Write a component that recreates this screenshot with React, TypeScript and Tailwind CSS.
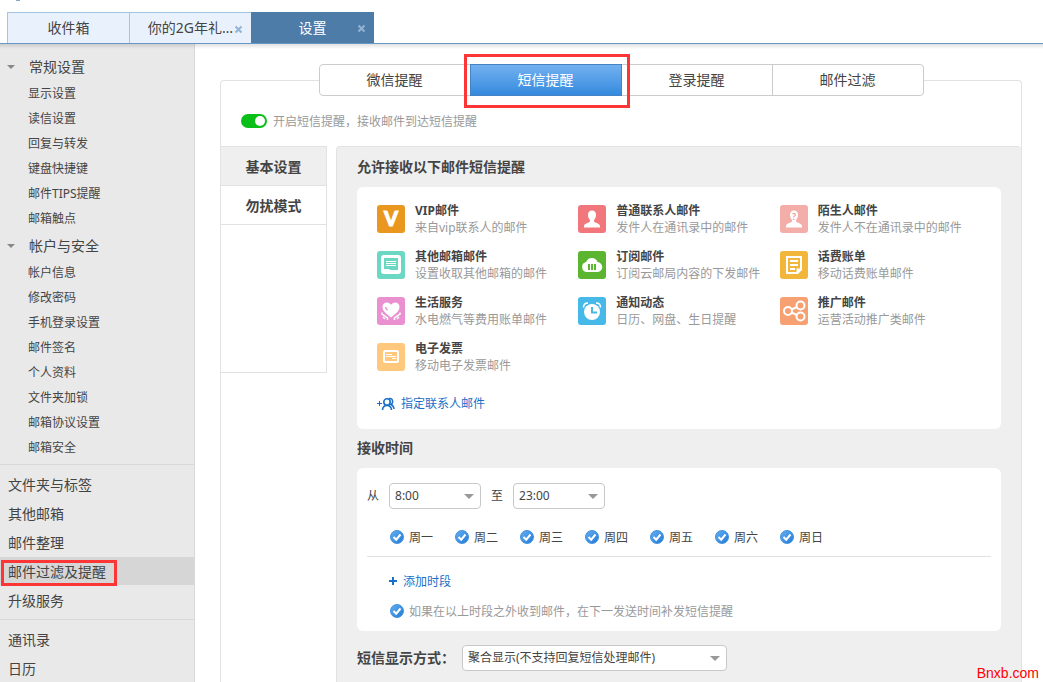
import { useState, type ReactNode } from "react";

const settingGroups = [
  {
    title: "常规设置",
    items: ["显示设置", "读信设置", "回复与转发", "键盘快捷键", "邮件TIPS提醒", "邮箱触点"],
  },
  {
    title: "帐户与安全",
    items: ["帐户信息", "修改密码", "手机登录设置", "邮件签名", "个人资料", "文件夹加锁", "邮箱协议设置", "邮箱安全"],
  },
];

const mailLinks = ["文件夹与标签", "其他邮箱", "邮件整理", "邮件过滤及提醒", "升级服务"];
const toolLinks = ["通讯录", "日历"];
const remindTabs = ["微信提醒", "短信提醒", "登录提醒", "邮件过滤"];
const weekdays = ["周一", "周二", "周三", "周四", "周五", "周六", "周日"];

type MailType = {
  title: string;
  desc: string;
  color: string;
  icon: ReactNode;
};

const mailTypes: MailType[] = [
  {
    title: "VIP邮件",
    desc: "来自vip联系人的邮件",
    color: "bg-[#ea971f]",
    icon: (
      <text
        x="14"
        y="21"
        textAnchor="middle"
        fontSize="20"
        fontWeight="900"
        fontFamily="Lato, sans-serif"
        fill="#fff"
        stroke="#fff"
        strokeWidth="1"
      >
        V
      </text>
    ),
  },
  {
    title: "普通联系人邮件",
    desc: "发件人在通讯录中的邮件",
    color: "bg-[#f2777c]",
    icon: (
      <path
        fill="#fff"
        d="M14 5.500c-2.600 0-4 1.700-4 4.500 0 1.900.7 3.600 1.900 4.700v2c-1 1-5.400 1.500-5.900 4V22.500h16v-1.800c-.5-2.500-4.900-3-5.900-4v-2c1.200-1.100 1.900-2.800 1.900-4.700 0-2.800-1.400-4.500-4-4.500z"
      />
    ),
  },
  {
    title: "陌生人邮件",
    desc: "发件人不在通讯录中的邮件",
    color: "bg-[#f3aeaa]",
    icon: (
      <>
        <path
          fill="#fff"
          d="M14 5.500c-2.600 0-4 1.700-4 4.500 0 1.900.7 3.600 1.900 4.700v2c-1 1-5.400 1.500-5.900 4V22.500h16v-1.800c-.5-2.500-4.900-3-5.900-4v-2c1.200-1.100 1.900-2.800 1.900-4.700 0-2.800-1.400-4.500-4-4.500z"
        />
        <text x="14" y="15" textAnchor="middle" fontSize="10" fontWeight="700" fontFamily="Lato, sans-serif" fill="#ef9a98">
          ?
        </text>
      </>
    ),
  },
  {
    title: "其他邮箱邮件",
    desc: "设置收取其他邮箱的邮件",
    color: "bg-[#6bd8c3]",
    icon: (
      <>
        <rect x="4" y="4" width="20" height="19" rx="3" fill="#fff" />
        <path d="M7 7h14v12h-8l-1-1H7z" fill="#6bd8c3" />
        <path d="M9 10.500h10M9 12.500h10M9 14.500h10" stroke="#fff" strokeWidth="1" />
      </>
    ),
  },
  {
    title: "订阅邮件",
    desc: "订阅云邮局内容的下发邮件",
    color: "bg-[#5cb531]",
    icon: (
      <>
        <path
          fill="#fff"
          d="M9 21a5 5 0 0 1-.8-9.900A6 6 0 0 1 19.500 11 5 5 0 0 1 19 21z"
        />
        <path d="M11 13v6M14 13v6M17 13v6" stroke="#5cb531" strokeWidth="2" />
      </>
    ),
  },
  {
    title: "话费账单",
    desc: "移动话费账单邮件",
    color: "bg-[#f2b63a]",
    icon: (
      <path
        fill="none"
        stroke="#fff"
        strokeWidth="2"
        d="M17.500 22H7V6h14v12.500h-3.500zM10 10h8M10 14h8M10 18h5M17.500 22l3.500-3.500"
      />
    ),
  },
  {
    title: "生活服务",
    desc: "水电燃气等费用账单邮件",
    color: "bg-[#ea8fd0]",
    icon: (
      <>
        <path
          fill="#fff"
          d="M14 20.500c-3-2.500-8.500-6-8.500-10.500 0-2.800 2-4.500 4.200-4.500 2 0 3.500 1 4.300 2.300.8-1.300 2.300-2.300 4.300-2.300 2.200 0 4.200 1.700 4.200 4.500 0 4.500-5.500 8-8.500 10.500z"
        />
        <path d="M8.500 10c.2 1.500 1 2.500 2 3" stroke="#ea8fd0" strokeWidth="1.500" fill="none" />
        <path
          d="M5 15.500v1.500l5.500 4v2M23 15.500v1.500l-5.500 4v2M6 20l2 2M22 20l-2 2"
          stroke="#fff"
          strokeWidth="1.500"
          fill="none"
        />
      </>
    ),
  },
  {
    title: "通知动态",
    desc: "日历、网盘、生日提醒",
    color: "bg-[#46b9e9]",
    icon: (
      <>
        <circle cx="14" cy="15" r="8" fill="#fff" />
        <path d="M5.500 10.500C5.500 7.500 7.500 6 10 6M22.500 10.500C22.500 7.500 20.500 6 18 6" stroke="#fff" strokeWidth="1.500" fill="none" />
        <path d="M14 10v5.500h5" stroke="#46b9e9" strokeWidth="2" fill="none" />
      </>
    ),
  },
  {
    title: "推广邮件",
    desc: "运营活动推广类邮件",
    color: "bg-[#f7a072]",
    icon: (
      <g fill="none" stroke="#fff" strokeWidth="2">
        <circle cx="8" cy="14" r="4" />
        <circle cx="20.500" cy="8.500" r="4" />
        <circle cx="20.500" cy="19.500" r="4" />
        <path d="M11.500 12.500l5.500-2.500M11.500 15.500l5.500 2.500" />
      </g>
    ),
  },
  {
    title: "电子发票",
    desc: "移动电子发票邮件",
    color: "bg-[#ffc87c]",
    icon: (
      <g fill="none" stroke="#fff">
        <rect x="7" y="8" width="14" height="11" rx="1" strokeWidth="2" />
        <path d="M9 11.500h6M9 13.500h10M15 15.500h4" strokeWidth="1" />
      </g>
    ),
  },
];

type TabProps = {
  label: string;
  active?: boolean;
  closable?: boolean;
};

const PageTab = ({ label, active, closable }: TabProps) => (
  <div
    className={`relative flex h-[31px] ${
      active
        ? "w-[123px] bg-[#4d7ca9] text-white"
        : "w-[122px] border-l border-t border-[#a6c5df] bg-[#e9f2fc] text-[#444]"
    }`}
  >
    <button type="button" className="flex-1 cursor-pointer text-sm">
      {label}
    </button>
    {closable && (
      <button type="button" aria-label={`关闭${label}`} className="absolute right-2 top-3 flex cursor-pointer">
        <svg width="9" height="9" viewBox="0 0 9 9" stroke="#94b4d4" strokeWidth="2">
          <path d="M1.500 1.500l6 6M7.500 1.500l-6 6" />
        </svg>
      </button>
    )}
  </div>
);

type CheckProps = {
  label: string;
  className?: string;
};

const Check = ({ label, className = "" }: CheckProps) => (
  <label className={`flex h-4 cursor-pointer items-center gap-[5px] ${className}`}>
    <span className="relative size-[14px]">
      <input
        type="checkbox"
        defaultChecked
        className="peer block size-[14px] appearance-none rounded-full border border-gray-400 bg-white checked:border-[#3c8fdd] checked:bg-linear-to-br checked:from-[#63aef2] checked:to-[#1f7ad6]"
      />
      <svg
        className="pointer-events-none absolute inset-0 hidden peer-checked:block"
        width="14"
        height="14"
        viewBox="0 0 14 14"
        fill="none"
        stroke="#fff"
        strokeWidth="2"
      >
        <path d="M3.500 7l2.700 2.700L10.500 4.500" />
      </svg>
    </span>
    <span className="pt-0.5">{label}</span>
  </label>
);

type SelectBoxProps = {
  label: string;
  options: string[];
  width: string;
};

const SelectBox = ({ label, options, width }: SelectBoxProps) => (
  <div className={`relative ${width}`}>
    <select
      aria-label={label}
      className="block h-[26px] w-full appearance-none rounded border border-[#c8c8c8] bg-white pl-[5px] text-xs text-[#444]"
    >
      {options.map((option) => (
        <option key={option}>{option}</option>
      ))}
    </select>
    <svg className="pointer-events-none absolute right-[7px] top-[11px]" width="10" height="5" viewBox="0 0 10 5" fill="#999">
      <path d="M0 0h10L5 5z" />
    </svg>
  </div>
);

const Sidebar = () => (
  <nav className="w-[195px] shrink-0 border-r border-[#d8d8d8] bg-[#e9e9e9] pt-2 text-[#444]">
    {settingGroups.map((group) => (
      <div key={group.title}>
        <button type="button" className="flex h-[29px] w-full cursor-pointer items-center pl-[7px] text-sm">
          <svg className="mr-[14px]" width="8" height="4" viewBox="0 0 8 4" fill="#888">
            <path d="M0 0h8L4 4z" />
          </svg>
          {group.title}
        </button>
        <ul>
          {group.items.map((item) => (
            <li key={item}>
              <a href="#" className="block pl-7 text-xs leading-[25px]">
                {item}
              </a>
            </li>
          ))}
        </ul>
      </div>
    ))}
    <ul className="mt-1 border-t border-[#d8d8d8] pb-1 pt-[5px] text-sm">
      {mailLinks.map((item) => (
        <li key={item} className="mb-px">
          <a
            href="#"
            className={`relative block pl-2 pt-0.5 leading-[26px] ${item === "邮件过滤及提醒" ? "bg-[#d6d6d6]" : ""}`}
          >
            {item}
            {item === "邮件过滤及提醒" && (
              <span className="absolute left-px top-[3px] h-[26px] w-[116px] border-3 border-[#fc3636]" />
            )}
          </a>
        </li>
      ))}
    </ul>
    <ul className="border-t border-[#d8d8d8] pt-[5px] text-sm">
      {toolLinks.map((item) => (
        <li key={item} className="mb-px">
          <a href="#" className="block pl-2 pt-0.5 leading-[26px]">
            {item}
          </a>
        </li>
      ))}
    </ul>
  </nav>
);

const App = () => {
  const [tab, setTab] = useState("短信提醒");

  return (
    <div className="relative flex min-h-screen flex-col bg-white font-['Noto_Sans','Noto_Sans_CJK_SC',sans-serif] text-xs text-[#444]">
      <header className="border-b border-[#6598c5]">
        <div className="h-3 pl-4">
          <svg width="4" height="1" viewBox="0 0 4 1">
            <path d="M0 0h4v1H0z" fill="#8ba6c4" />
          </svg>
        </div>
        <div className="flex pl-[7px]">
          <PageTab label="收件箱" />
          <PageTab label="你的2G年礼…" closable />
          <PageTab label="设置" active closable />
        </div>
      </header>

      <div className="flex flex-1">
        <Sidebar />

        <main className="flex flex-1 flex-col pl-[25px] pr-[21px] pt-5">
          <div className="relative z-10 flex h-8 w-[605px] self-center rounded border border-[#ccc] bg-white">
            {remindTabs.map((item, i) => (
              <button
                key={item}
                type="button"
                onClick={() => setTab(item)}
                className={`relative flex-1 cursor-pointer text-sm ${
                  tab === item
                    ? "-my-px border border-[#4583c4] bg-linear-to-b from-[#72b1f0] to-[#338ade] text-white"
                    : i === 3
                      ? "border-l border-[#ccc]"
                      : ""
                }`}
              >
                {item}
                {item === "短信提醒" && (
                  <span className="absolute -bottom-[13px] -left-[7px] -right-[9px] -top-[11px] border-3 border-[#fc3636]" />
                )}
              </button>
            ))}
          </div>

          <div className="-mt-4 flex flex-1 flex-col rounded-t border-l border-r border-t border-[#e2e2e2]">
            <label className="flex h-[65px] cursor-pointer items-center gap-[6px] pl-5 pt-[15px] text-[#999]">
              <input
                type="checkbox"
                role="switch"
                defaultChecked
                className="flex h-[14px] w-[26px] appearance-none rounded-full bg-gray-400 p-[2px] before:size-[10px] before:rounded-full before:bg-white checked:justify-end checked:bg-[#0abf18]"
              />
              <span className="pt-px">开启短信提醒，接收邮件到达短信提醒</span>
            </label>

            <div className="flex flex-1 gap-[9px]">
              <div className="h-[227px] w-[106px] shrink-0 border-b border-r border-t border-[#e2e2e2] text-sm font-bold">
                <button
                  type="button"
                  className="block h-[39px] w-full cursor-pointer border-b border-[#e2e2e2] bg-[#efefef] pt-0.5"
                >
                  基本设置
                </button>
                <button type="button" className="block h-[39px] w-full cursor-pointer border-b border-[#e2e2e2] pt-0.5">
                  勿扰模式
                </button>
              </div>

              <div className="flex-1 rounded-t border-l border-t border-[#e2e2e2] bg-[#efefef] pb-[11px] pl-5 pr-5 pt-px">
                <h2 className="flex h-[39px] items-center pb-0.5 text-sm font-bold">允许接收以下邮件短信提醒</h2>
                <section className="rounded-md bg-white px-5 py-[15px]">
                  <ul className="grid grid-cols-3 gap-y-3">
                    {mailTypes.map((type) => (
                      <li key={type.title} className="flex items-center gap-[10px] whitespace-nowrap leading-[17px]">
                        <svg className={`size-7 shrink-0 rounded-[3px] ${type.color}`} viewBox="0 0 28 28">
                          {type.icon}
                        </svg>
                        <div>
                          <h3 className="font-bold">{type.title}</h3>
                          <p className="text-[#999]">{type.desc}</p>
                        </div>
                      </li>
                    ))}
                  </ul>
                  <a href="#" className="mt-5 flex h-5 items-center gap-[6px] text-[#1a70c8]">
                    <svg width="18" height="14" viewBox="0 0 18 14" fill="none" stroke="currentColor">
                      <path d="M0 6.500h5M2.500 4v5" strokeWidth="1" />
                      <circle cx="10" cy="5" r="3.200" strokeWidth="1.600" />
                      <path d="M5.500 13c.2-2.800 1.500-4.500 4.500-4.500s4.300 1.700 4.500 4.500" strokeWidth="1.600" />
                      <path d="M12 1.500c4.200-1 4.500 4.500 2 6 1.500.6 2.800 2.200 3 4.500" strokeWidth="1.500" />
                    </svg>
                    指定联系人邮件
                  </a>
                </section>

                <h2 className="flex h-[39px] items-center pb-0.5 text-sm font-bold">接收时间</h2>
                <section className="rounded-md bg-white px-[10px] pb-3 pt-[15px]">
                  <div className="flex items-center gap-[10px]">
                    <span>从</span>
                    <SelectBox label="开始时间" options={["8:00", "9:00", "10:00"]} width="w-[92px]" />
                    <span>至</span>
                    <SelectBox label="结束时间" options={["23:00", "22:00", "21:00"]} width="w-[92px]" />
                  </div>
                  <div className="mt-5 flex pl-[23px]">
                    {weekdays.map((day) => (
                      <Check key={day} label={day} className="w-[65px]" />
                    ))}
                  </div>
                  <div className="mt-[11px] border-t border-[#e2e2e2] pl-[22px]">
                    <a href="#" className="mt-4 flex h-4 items-center gap-[6px] text-[#1a70c8]">
                      <svg width="8" height="8" viewBox="0 0 8 8" stroke="currentColor" strokeWidth="2">
                        <path d="M0 4h8M4 0v8" />
                      </svg>
                      <span className="pt-0.5">添加时段</span>
                    </a>
                    <Check
                      label="如果在以上时段之外收到邮件，在下一发送时间补发短信提醒"
                      className="ml-px mt-[14px] text-[#999]"
                    />
                  </div>
                </section>

                <div className="mt-[14px] flex items-center gap-[7px]">
                  <h2 className="text-sm font-bold">短信显示方式：</h2>
                  <SelectBox
                    label="短信显示方式"
                    options={["聚合显示(不支持回复短信处理邮件)", "逐条显示"]}
                    width="w-[265px]"
                  />
                </div>
              </div>
            </div>
          </div>
        </main>
      </div>

      {/* shade under the header */}
      <div className="pointer-events-none absolute inset-x-0 top-[44px] h-[5px] bg-linear-to-b from-black/12 to-transparent" />
      <span className="absolute bottom-0 right-1 font-['Liberation_Sans',sans-serif] text-sm leading-5 text-[#f00]">
        Bnxb.com
      </span>
    </div>
  );
};

export default App;
